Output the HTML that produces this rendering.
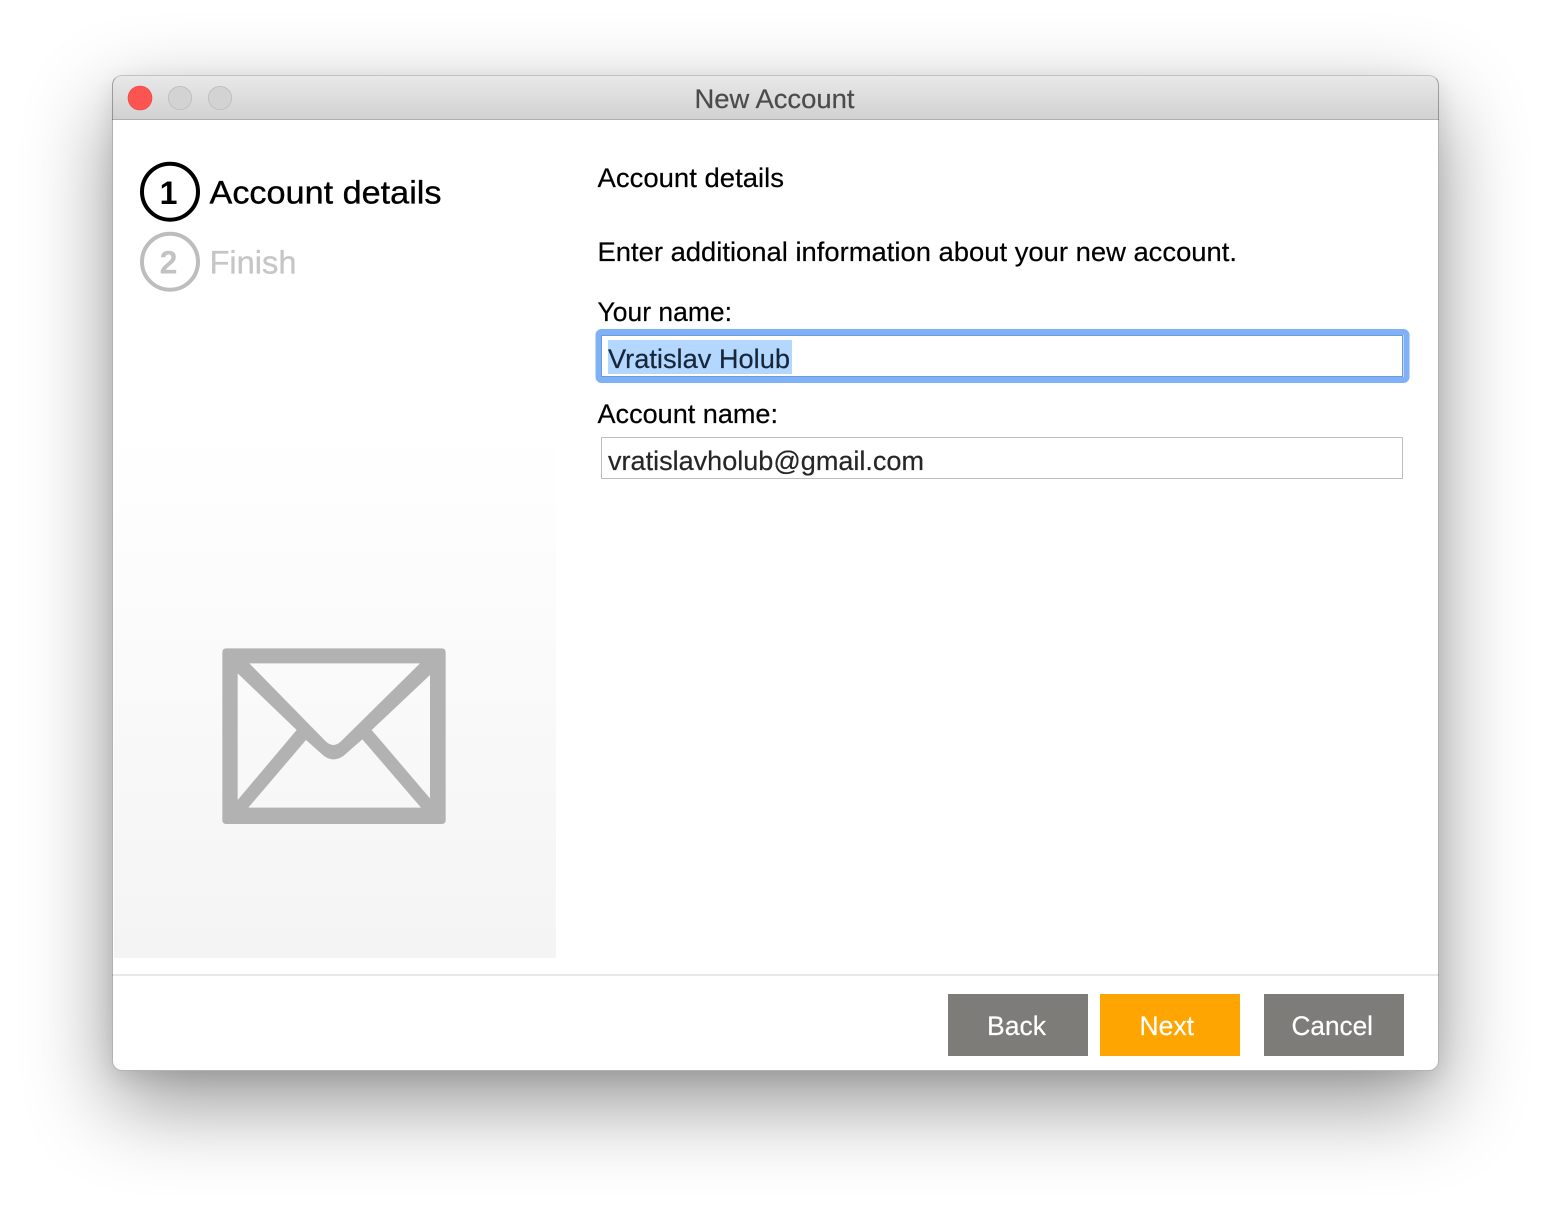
<!DOCTYPE html>
<html lang="en">
<head>
<meta charset="utf-8">
<title>New Account</title>
<style>
html,body{margin:0;padding:0;background:#fff;width:1550px;height:1218px;overflow:hidden}
#win{position:absolute;left:111.5px;top:75px;width:1327px;height:995.5px;box-sizing:border-box;border-radius:10px;background:#fff;box-shadow:0 32px 85px 0 rgba(0,0,0,.42),0 7px 22px 0 rgba(0,0,0,.09);overflow:hidden}
#tb{position:absolute;left:0;top:0;width:100%;height:45px;box-sizing:border-box;background:linear-gradient(#e9e9e9,#d1d1d1);border-bottom:1px solid #b0b0b0}
#side{position:absolute;left:2.5px;top:355px;width:442px;height:528px;background:linear-gradient(#fff,#f4f4f4)}
#sep{position:absolute;left:0;top:899px;width:100%;height:2px;background:#e8e8e8}
#edge{position:absolute;left:111.5px;top:75px;width:1327px;height:995.5px;box-sizing:border-box;border-radius:10px;border:1px solid rgba(0,0,0,.3);border-top-color:rgba(0,0,0,.16)}
svg{position:absolute;left:0;top:0}
text{font-family:"Liberation Sans",sans-serif;stroke-width:.2px}
.big{stroke-width:.35px}
</style>
</head>
<body>
<div id="win"><div id="tb"></div><div id="side"></div><div id="sep"></div></div>
<div id="edge"></div>
<svg width="1550" height="1218" viewBox="0 0 1550 1218">
<circle cx="140" cy="98" r="12" fill="#fc5551" stroke="#e5493f" stroke-width=".6"/>
<circle cx="180" cy="98" r="11.6" fill="#d3d3d3" stroke="#bcbcbc" stroke-width=".8"/>
<circle cx="220" cy="98" r="11.6" fill="#d3d3d3" stroke="#bcbcbc" stroke-width=".8"/>
<text x="694.5" y="108" font-size="27" fill="#4b4b4b" stroke="#4b4b4b" textLength="160" lengthAdjust="spacingAndGlyphs">New Account</text>

<circle cx="170" cy="191.7" r="28" fill="none" stroke="#000" stroke-width="4"/>
<text x="168.5" y="204" font-size="32" font-weight="bold" text-anchor="middle" fill="#000">1</text>
<text class="big" x="209.5" y="203.5" font-size="32" fill="#000" stroke="#000" textLength="232" lengthAdjust="spacingAndGlyphs">Account details</text>
<circle cx="170" cy="261.7" r="28" fill="none" stroke="#bdbdbd" stroke-width="4"/>
<text x="168.5" y="273.5" font-size="32" font-weight="bold" text-anchor="middle" fill="#c2c2c2">2</text>
<text class="big" x="209.5" y="273.5" font-size="32" fill="#c6c6c6" stroke="#c6c6c6" textLength="87" lengthAdjust="spacingAndGlyphs">Finish</text>

<g transform="translate(200 630) scale(.33333)">
<path fill="#b2b2b2" fill-rule="evenodd" d="M79 55H725Q737 55 737 67V570Q737 582 725 582H79Q67 582 67 570V67Q67 55 79 55ZM148 100L378 335Q400 355 422 335L660 100ZM113 130V510L290 300ZM690 135L515 300L690 505ZM145 533H663L487 328L430 378Q400 398 372 378L318 330Z"/>
</g>

<text x="597.5" y="187" font-size="27" fill="#000" stroke="#000" textLength="186.5" lengthAdjust="spacingAndGlyphs">Account details</text>
<text x="597.5" y="261" font-size="27" fill="#000" stroke="#000" textLength="639.5" lengthAdjust="spacingAndGlyphs">Enter additional information about your new account.</text>
<text x="597.5" y="321" font-size="27" fill="#000" stroke="#000" textLength="134.5" lengthAdjust="spacingAndGlyphs">Your name:</text>

<rect x="598.5" y="332" width="808" height="48" rx="3" fill="#fff" stroke="#7fb1f6" stroke-width="6"/>
<rect x="601.5" y="335.5" width="801" height="41" fill="none" stroke="#6c9ae0" stroke-width="1"/>
<rect x="608" y="340" width="184" height="34" fill="#b3d7ff"/>
<text x="608" y="368" font-size="27" fill="#17263a" stroke="#17263a" textLength="182" lengthAdjust="spacingAndGlyphs">Vratislav Holub</text>

<text x="597.5" y="423" font-size="27" fill="#000" stroke="#000" textLength="180.5" lengthAdjust="spacingAndGlyphs">Account name:</text>
<rect x="601.5" y="437.5" width="801" height="41" fill="#fff" stroke="#bdbdbd" stroke-width="1"/>
<text x="608" y="470" font-size="27" fill="#262626" stroke="#262626" textLength="316" lengthAdjust="spacingAndGlyphs">vratislavholub@gmail.com</text>

<rect x="948" y="994" width="140" height="62" fill="#7d7c78"/>
<rect x="1100" y="994" width="140" height="62" fill="#ffa502"/>
<rect x="1264" y="994" width="140" height="62" fill="#7d7c78"/>
<text x="987" y="1035" font-size="27" fill="#fff" stroke="#fff" textLength="59" lengthAdjust="spacingAndGlyphs">Back</text>
<text x="1139.5" y="1035" font-size="27" fill="#fff" stroke="#fff" textLength="54.5" lengthAdjust="spacingAndGlyphs">Next</text>
<text x="1291.5" y="1035" font-size="27" fill="#fff" stroke="#fff" textLength="81.5" lengthAdjust="spacingAndGlyphs">Cancel</text>
</svg>
</body>
</html>
